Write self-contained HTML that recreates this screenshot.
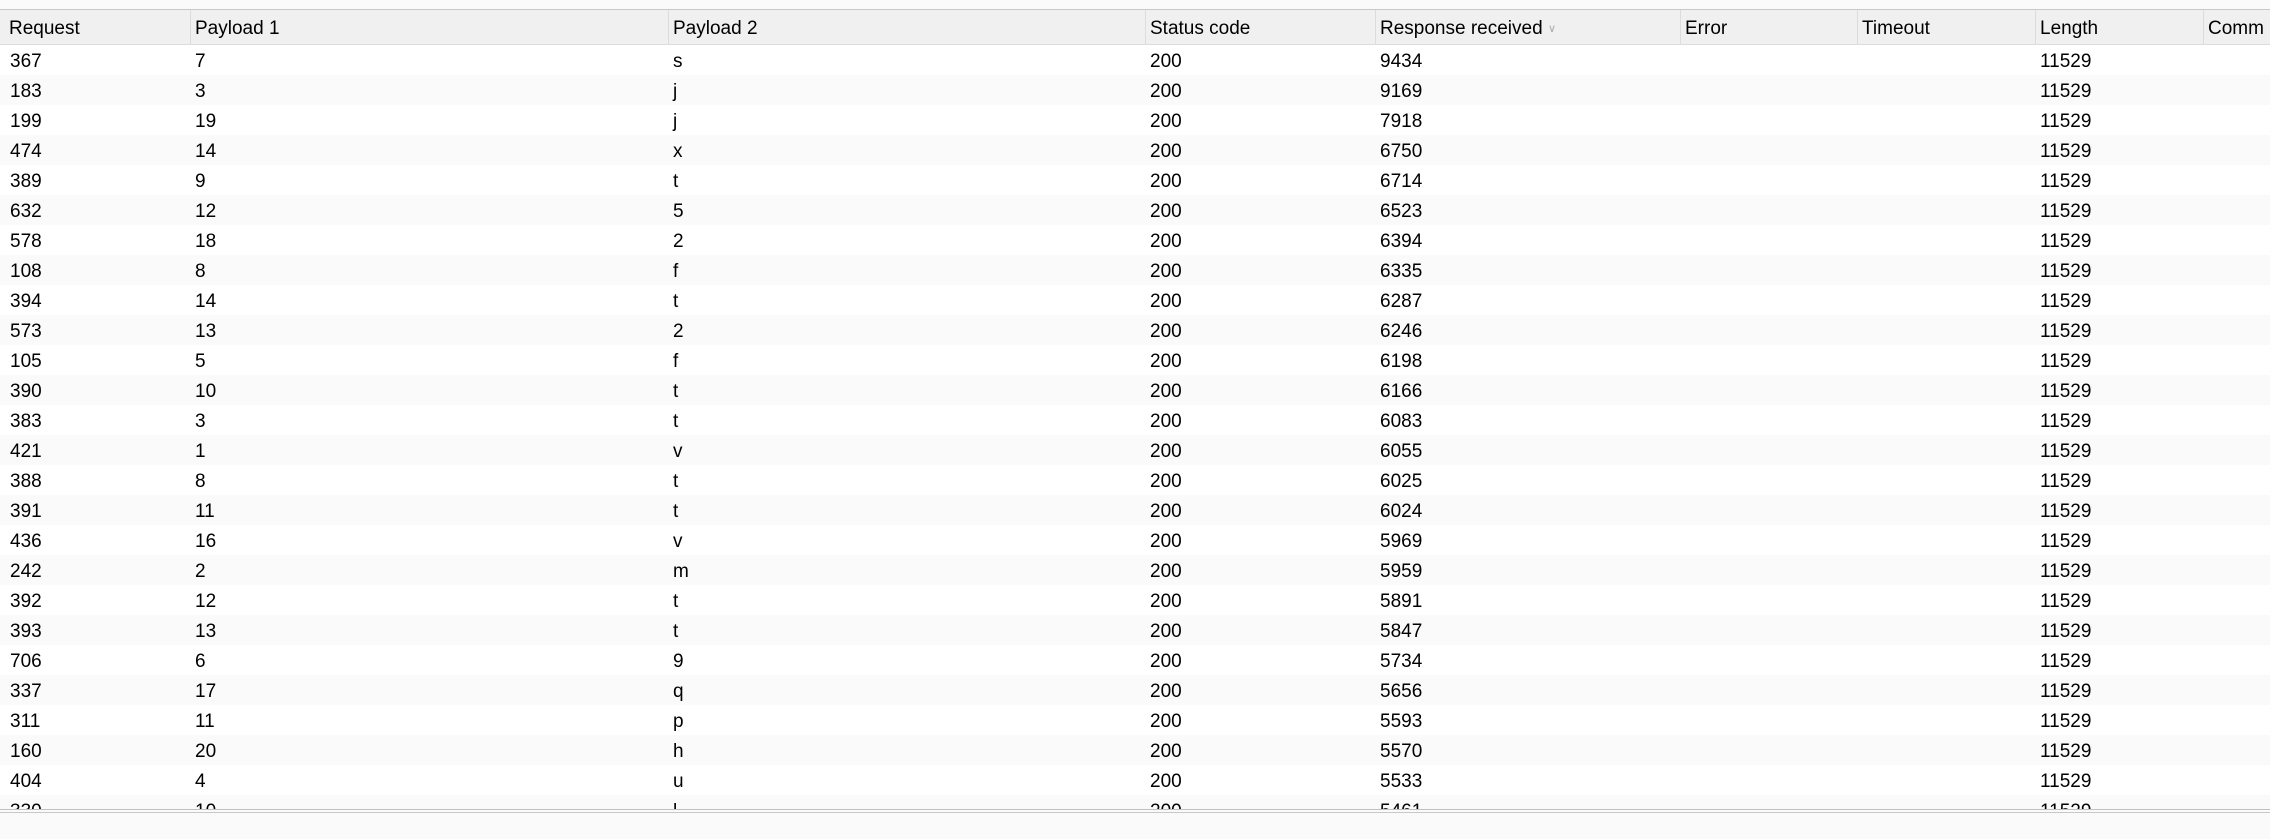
<!DOCTYPE html>
<html><head><meta charset="utf-8"><style>
body{margin:0;width:2270px;height:838px;overflow:hidden;background:#fafafa;font-family:"Segoe UI","Liberation Sans",sans-serif;font-size:19px;color:#000;position:relative}
#top{position:absolute;left:0;top:0;width:2270px;height:9px;background:#fafafa;border-bottom:1px solid #c8c8c8}
#hdr{position:absolute;left:0;top:10px;width:2270px;height:34px;background:#f0f0f0;border-bottom:1px solid #dcdcdc}
#hdr div{position:absolute;top:0;height:34px;line-height:34px;padding-top:2px;border-left:1px solid #dcdcdc;padding-left:4px;box-sizing:border-box}
#body{position:absolute;left:0;top:45px;width:2270px;height:764px;overflow:hidden;background:#fff}
.r{position:absolute;left:0;width:2270px;height:30px;line-height:30px}
.r span{position:absolute;top:2px}
.o{background:#fafafa}
#bot{position:absolute;left:0;top:809px;width:2270px;height:29px;background:#fafafa;border-top:1px solid #c0c0c0}
#bot2{position:absolute;left:0;top:812px;width:2270px;height:1px;background:#c8c8c8}
</style></head><body>
<div id="top"></div>
<div id="hdr">
<div style="left:-1px;width:191px;padding-left:10px;border-left:none">Request</div>
<div style="left:190px;width:478px">Payload 1</div>
<div style="left:668px;width:477px">Payload 2</div>
<div style="left:1145px;width:230px">Status code</div>
<div style="left:1375px;width:305px">Response received <span style="color:#aaa;font-size:11px;vertical-align:middle">∨</span></div>
<div style="left:1680px;width:177px">Error</div>
<div style="left:1857px;width:178px">Timeout</div>
<div style="left:2035px;width:168px">Length</div>
<div style="left:2203px;width:80px">Comm</div>
</div>
<div id="body">
<script>
var d=[["367","7","s","9434"],["183","3","j","9169"],["199","19","j","7918"],["474","14","x","6750"],["389","9","t","6714"],["632","12","5","6523"],["578","18","2","6394"],["108","8","f","6335"],["394","14","t","6287"],["573","13","2","6246"],["105","5","f","6198"],["390","10","t","6166"],["383","3","t","6083"],["421","1","v","6055"],["388","8","t","6025"],["391","11","t","6024"],["436","16","v","5969"],["242","2","m","5959"],["392","12","t","5891"],["393","13","t","5847"],["706","6","9","5734"],["337","17","q","5656"],["311","11","p","5593"],["160","20","h","5570"],["404","4","u","5533"],["330","10","l","5461"]];
var h="";
for(var i=0;i<d.length;i++){var r=d[i];
h+='<div class="r'+(i%2?' o':'')+'" style="top:'+(i*30)+'px"><span style="left:10px">'+r[0]+'</span><span style="left:195px">'+r[1]+'</span><span style="left:673px">'+r[2]+'</span><span style="left:1150px">200</span><span style="left:1380px">'+r[3]+'</span><span style="left:2040px">11529</span></div>';}
document.write(h);
</script>
</div>
<div id="bot"></div>
<div id="bot2"></div>
</body></html>
